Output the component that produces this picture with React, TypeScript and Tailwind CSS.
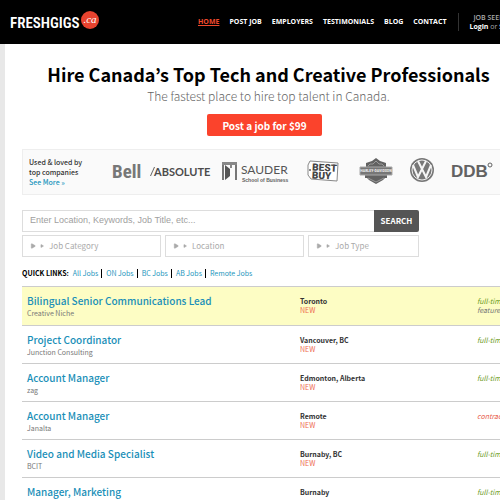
import React from 'react';
import { Play } from 'lucide-react';

interface Job {
  title: string;
  company?: string;
  location: string;
  isNew: boolean;
  type: 'full-time' | 'contract';
  featured?: boolean;
}

const navItems = ['HOME', 'POST JOB', 'EMPLOYERS', 'TESTIMONIALS', 'BLOG', 'CONTACT'];

const quickLinks = ['All Jobs', 'ON Jobs', 'BC Jobs', 'AB Jobs', 'Remote Jobs'];

const jobs: Job[] = [
  { title: 'Bilingual Senior Communications Lead', company: 'Creative Niche', location: 'Toronto', isNew: true, type: 'full-time', featured: true },
  { title: 'Project Coordinator', company: 'Junction Consulting', location: 'Vancouver, BC', isNew: true, type: 'full-time' },
  { title: 'Account Manager', company: 'zag', location: 'Edmonton, Alberta', isNew: true, type: 'full-time' },
  { title: 'Account Manager', company: 'Janalta', location: 'Remote', isNew: true, type: 'contract' },
  { title: 'Video and Media Specialist', company: 'BCIT', location: 'Burnaby, BC', isNew: true, type: 'full-time' },
  { title: 'Manager, Marketing', location: 'Burnaby', isNew: false, type: 'full-time' },
];

const Header: React.FC = () => (
  <header className="flex h-11 items-center bg-black pl-[10px] text-white">
    <a href="#home" aria-label="FreshGigs.ca" className="shrink-0">
      <svg width="90" height="30" viewBox="0 0 90 30">
        <text x="0" y="21" fontSize="15" fontWeight="600" fill="#fff" fontFamily="'Liberation Sans Narrow', 'Roboto Condensed', sans-serif">FRESHGIGS</text>
        <circle cx="80" cy="13" r="9" fill="#e8432f" />
        <text x="80" y="16" fontSize="11" fontStyle="italic" textAnchor="middle" fill="#fff" fontFamily="'Liberation Serif', serif">.ca</text>
      </svg>
    </a>
    <nav className="ml-[98px] flex shrink-0 gap-[10px] text-[7px] leading-3 font-bold font-['Open_Sans','Noto_Sans',sans-serif]">
      {navItems.map((item) => (
        <a key={item} href="#nav" className={item === 'HOME' ? 'text-[#f0492d] underline' : 'text-white'}>
          {item}
        </a>
      ))}
    </nav>
    <div className="ml-3 shrink-0 border-l border-[#333] pl-[10px] text-[7px] leading-[9px] text-[#aaa] font-['Open_Sans','Noto_Sans',sans-serif]">
      <div className="pl-1 font-semibold">JOB SEEKERS</div>
      <a href="#login" className="font-bold text-white">Login</a> or{' '}
      <a href="#signup" className="font-bold text-white">Sign up</a>
    </div>
  </header>
);

const ClientLogos: React.FC = () => (
  <svg width="400" height="44" viewBox="0 0 400 44" className="shrink-0" fill="#626262">
    <text x="3" y="28" fontSize="19" fontWeight="700" fontFamily="'Liberation Sans Narrow', 'Roboto Condensed', sans-serif" fill="#777">Bell</text>

    <path d="M41 26 45 17h1l-4 9z" />
    <text x="45" y="26" fontSize="11" fontWeight="700" fontFamily="Lato, sans-serif" fill="#4c4c4c">ABSOLUTE</text>

    <path d="M113 12h15v18h-2V14h-11v16h-2z" fill="#777" />
    <path d="M116 15l5 4v7l-5 4z" fill="#555" />
    <path d="M121 15h2v3h-2zM113 12h15v3h-15z" fill="#888" />
    <text x="132" y="24" fontSize="12" fontFamily="Lato, sans-serif" fill="#555">SAUDER</text>
    <text x="133" y="32" fontSize="5" fontWeight="700" fontFamily="'Liberation Sans', sans-serif">School of Business</text>

    <path d="M201 11l28 2-1 18-26-2-3-4V15z" fill="#fff" stroke="#888" />
    <circle cx="201" cy="20" r="1" />
    <g transform="rotate(3 214 23)">
      <text x="203" y="21" fontSize="10" fontWeight="900" fontFamily="Roboto, sans-serif" fill="#444">BEST</text>
      <text x="203" y="29" fontSize="10" fontWeight="900" fontFamily="Roboto, sans-serif" fill="#444">BUY</text>
    </g>

    <path d="M267 8l4 3 6 2v4h1v11h-2l-2 2-7 4-7-4-2-2h-2V17h1v-4l6-2z" />
    <path d="M251 17h32v8h-32z" fill="#777" stroke="#aaa" />
    <text x="267" y="22" fontSize="4" fontWeight="700" textAnchor="middle" fontFamily="'Liberation Sans Narrow', 'Roboto Condensed', sans-serif" fill="#eee">HARLEY-DAVIDSON</text>
    <path d="M259 16l2-2h3l3-3 3 3h3l2 2M259 28l8 4 8-4" fill="none" stroke="#999" />

    <circle cx="313" cy="20" r="12" fill="#777" />
    <circle cx="313" cy="20" r="10" fill="none" stroke="#eee" />
    <path d="M309 11l4 8 4-8M304 15l5 12 4-8 4 8 5-12" fill="none" stroke="#f5f5f5" strokeWidth="2" />

    <text x="342" y="27" fontSize="17" fontWeight="700" fontFamily="'Liberation Sans', sans-serif">DDB</text>
    <circle cx="381" cy="15" r="2" fill="none" stroke="#626262" />
  </svg>
);

const FilterSelect: React.FC<{ label: string; className: string }> = ({ label, className }) => (
  <label className={`flex h-[22px] items-center border border-[#ddd] pl-[7px] text-[#aaa] ${className}`}>
    <Play size={6} fill="currentColor" className="shrink-0" />
    <Play size={4} fill="currentColor" className="ml-1 shrink-0" />
    <select aria-label={label} className="ml-[5px] min-w-0 flex-1 appearance-none bg-transparent text-[8px] leading-3 outline-none">
      <option>{label}</option>
    </select>
  </label>
);

const SearchForm: React.FC = () => (
  <form className="mt-[15px] w-[397px]" onSubmit={(e) => e.preventDefault()}>
    <div className="flex h-[22px]">
      <input
        type="text"
        aria-label="Search jobs"
        placeholder="Enter Location, Keywords, Job Title, etc..."
        className="min-w-0 flex-1 border border-r-0 border-[#ddd] px-[7px] text-[9px] outline-none placeholder:text-[#a0a0a0] font-['Liberation_Sans',sans-serif]"
      />
      <button type="submit" className="w-[45px] rounded-r-xs bg-[#555] text-[8px] font-bold text-white">SEARCH</button>
    </div>
    <div className="mt-[3px] flex gap-1">
      <FilterSelect label="Job Category" className="w-[139px]" />
      <FilterSelect label="Location" className="w-[139px]" />
      <FilterSelect label="Job Type" className="flex-1" />
    </div>
  </form>
);

const JobTable: React.FC = () => (
  <table className="w-full table-fixed border-collapse text-left">
    <tbody>
      {jobs.map((job, index) => (
        <tr key={index} className={`border-t border-[#ccc] align-top ${job.featured ? 'h-[39px] bg-[#fdfdc4]' : 'h-[38px]'}`}>
          <td className="w-[278px] pt-[7px] pl-[5px]">
            <a href="#job" className="block text-[10px] leading-[14px] font-medium text-[#1a8fb8]">{job.title}</a>
            <div className="text-[7px] leading-[10px] text-[#777]">{job.company}</div>
          </td>
          <td className="w-[177px] pt-[10px] text-[7px] leading-[9px]">
            <div className="font-bold text-[#333]">{job.location}</div>
            {job.isNew && <div className="text-[#ee6a50]">NEW</div>}
          </td>
          <td className="pt-[10px] text-[7px] leading-[9px] whitespace-nowrap italic">
            <div className={job.type === 'contract' ? 'text-[#e8604c]' : 'text-[#6b9a1e]'}>{job.type}</div>
            {job.featured && <div className="text-[#777]">featured</div>}
          </td>
        </tr>
      ))}
    </tbody>
  </table>
);

const App: React.FC = () => {
  return (
    <div className="h-screen overflow-hidden bg-[#e8e8e8] font-['Noto_Sans_CJK_JP',sans-serif]">
      <div className="min-w-[532px]">
        <Header />
        <main className="ml-[5px] bg-white px-[17px]">
          <section className="flex flex-col items-center pt-4 text-center">
            <h1 className="text-[18px] leading-7 font-bold whitespace-nowrap text-black">Hire Canada’s Top Tech and Creative Professionals</h1>
            <p className="text-[12px] leading-4 font-light text-[#666]">The fastest place to hire top talent in Canada.</p>
            <button type="button" className="mt-[10px] mr-2 h-[22px] w-[115px] rounded-xs bg-[#fb432c] text-[10px] font-bold text-white">
              Post a job for $99
            </button>
          </section>

          <section className="mt-[13px] flex h-[46px] items-center border border-[#eee] bg-[#fafafa] pl-[6px]">
            <div className="w-20 shrink-0 text-[7px] leading-[10px] font-medium text-[#333]">
              Used &amp; loved by
              <br />
              top companies
              <br />
              <a href="#more" className="text-[#2496bd]">See More »</a>
            </div>
            <ClientLogos />
          </section>

          <SearchForm />

          <div className="mt-[10px] flex h-3 items-center text-[7px]">
            <strong className="mr-1 text-black">QUICK LINKS:</strong>
            {quickLinks.map((link, index) => (
              <a key={link} href="#jobs" className={`leading-[9px] text-[#2496bd] ${index > 0 ? 'ml-[3px] border-l border-black pl-1' : ''}`}>
                {link}
              </a>
            ))}
          </div>

          <div className="mt-[7px]">
            <JobTable />
          </div>
        </main>
      </div>
    </div>
  );
};

export default App;
